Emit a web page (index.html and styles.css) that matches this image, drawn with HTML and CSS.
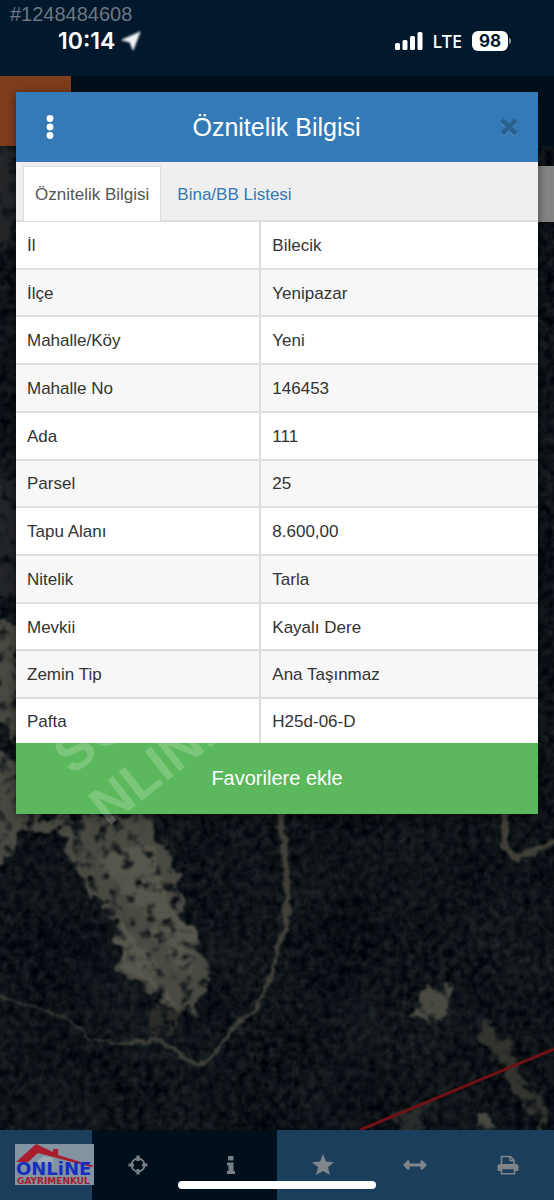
FILE: index.html
```html
<!DOCTYPE html>
<html lang="tr">
<head>
    <meta charset="UTF-8">
    <meta name="viewport" content="width=device-width, initial-scale=1.0">
    <title>Öznitelik Bilgisi</title>
    <link rel="stylesheet" href="styles.css">
</head>
<body>

    <div class="status-bar">
        <div class="listing-no">#1248484608</div>
        <div class="status-row">
            <div class="status-left">
                <span class="clock">10:14</span>
                <svg class="location" width="20" height="20" viewBox="0 0 20 20"><path d="M19 1L1 9L9 11L12 19Z" fill="#f0f3f5" stroke="#f0f3f5"/></svg>
            </div>
            <div class="status-right">
                <svg width="28" height="18" viewBox="0 0 28 18" fill="#fff">
                    <rect x="0" y="11" width="5" height="7" rx="1.500"/>
                    <rect x="7.500" y="8" width="5" height="10" rx="1.500"/>
                    <rect x="15" y="4" width="5" height="14" rx="1.500"/>
                    <rect x="22.500" y="0" width="5" height="18" rx="1.500"/>
                </svg>
                <span class="network">LTE</span>
                <span class="battery">98</span>
            </div>
        </div>
    </div>

    <div class="app-header">
        <div class="app-logo"></div>
    </div>

    <main class="map">
        <svg class="map-image" viewBox="0 0 554 984" preserveAspectRatio="xMidYMid slice">
            <defs>
                <filter id="forest" x="0" y="0" width="100%" height="100%" color-interpolation-filters="sRGB">
                    <feTurbulence type="fractalNoise" baseFrequency="0.13 0.117" numOctaves="3" seed="8" result="trees"/>
                    <feTurbulence type="fractalNoise" baseFrequency="0.013" numOctaves="3" seed="21" result="ground"/>
                    <feComposite in="trees" in2="ground" operator="arithmetic" k2="0.7" k3="0.3"/>
                    <feColorMatrix values="0.24 0 0 0 -0.07  0.25 0 0 0 -0.052  0.22 0.02 0 0 -0.03  0 0 0 0 1"/>
                </filter>
                <filter id="rough" x="-20%" y="-20%" width="140%" height="140%" color-interpolation-filters="sRGB">
                    <feTurbulence type="fractalNoise" baseFrequency="0.06" numOctaves="4" seed="3" result="n"/>
                    <feDisplacementMap in="SourceGraphic" in2="n" scale="30" xChannelSelector="R" yChannelSelector="G" result="d"/>
                    <feTurbulence type="fractalNoise" baseFrequency="0.083" numOctaves="4" seed="15"/>
                    <feColorMatrix values="0 0 0 0 0  0 0 0 0 0  0 0 0 0 0  4 0 0 0 -0.9" result="holes"/>
                    <feComposite in="d" in2="holes" operator="in"/>
                    <feGaussianBlur stdDeviation="0.9"/>
                </filter>
                <filter id="path" x="-20%" y="-20%" width="140%" height="140%">
                    <feTurbulence type="fractalNoise" baseFrequency="0.1" numOctaves="3" seed="5"/>
                    <feDisplacementMap in="SourceGraphic" scale="9" xChannelSelector="R" yChannelSelector="G"/>
                    <feGaussianBlur stdDeviation="0.9"/>
                </filter>
            </defs>
            <rect width="554" height="984" fill="#0f151a"/>
            <rect width="554" height="984" filter="url(#forest)"/>

            <!-- bare ground -->
            <g filter="url(#rough)" fill="#4a4a42">
                <path d="M-20 0H20V60L12 100H-20Z" fill="#242628"/>
                <path d="M-20 330H20V450H-20Z" fill="#24262a"/>
                <path d="M-20 480H20V600L-20 560Z"/>
                <path d="M-20 605L12 610L22 665L70 672L150 665L172 712L185 755L175 770L205 810L210 835L195 868L155 852L120 825L116 775L90 740L68 705L60 685L20 692L5 720L-20 725Z"/>
                <path d="M95 705L150 700L170 750L195 790L190 830L160 790L125 750Z" fill="#57564c"/>
                <path d="M120 770L175 855L140 835L118 805Z" fill="#59584e"/>
                <path d="M150 860L185 860L160 900L150 890Z" fill="#2c2c29"/>
                <path d="M410 870L440 833L456 846L443 868L425 877Z"/>
                <path d="M480 868L508 895L524 935L548 960L545 984L528 970L505 925L480 890Z" fill="#33342f"/>
                <path d="M398 960L425 960L425 984H398Z" fill="#292b2b"/>
                <path d="M478 974L490 960L500 984H478Z"/>
            </g>

            <!-- tracks -->
            <g filter="url(#path)" fill="none" stroke="#413f39" stroke-linecap="round">
                <path d="M282 660L286 720L289 765L278 800L273 825L258 860L230 885L212 912L195 920L180 908L160 895L120 897" stroke-width="4"/>
                <path d="M280 665L284 710L288 750L285 785" stroke-width="6"/>
                <path d="M120 897L90 896L80 882L55 868L0 850" stroke-width="2"/>
                <path d="M506 660L504 700L518 713L554 696" stroke-width="7"/>
            </g>
            <path d="M360 984L554 903" stroke="#6d1114" stroke-width="3" fill="none"/>
        </svg>
        <div class="map-control"></div>
    </main>

    <nav class="toolbar">
        <button class="tool" aria-label="Katmanlar"></button>
        <button class="tool tool-dark" aria-label="Konum">
            <svg width="20" height="20" viewBox="0 0 20 20" fill="none" stroke="#777f84">
                <circle cx="10" cy="10" r="6.500" stroke-width="1.800"/>
                <path d="M10 .5V6M10 14V19.500M.5 10H6M14 10H19.500" stroke-width="3.200"/>
            </svg>
        </button>
        <button class="tool tool-dark" aria-label="Bilgi">
            <svg width="10" height="20" viewBox="0 0 10 20" fill="#777f84">
                <rect x="2" y="1" width="5.500" height="4.500" rx="1"/>
                <path d="M1 7.500H7.500V16H9V19H1V16H2.500V10.500H1Z"/>
            </svg>
        </button>
        <button class="tool" aria-label="Favoriler">
            <svg width="22" height="22" viewBox="0 0 22 22" fill="#7f8588"><path d="M11 0L14 7.500L22 8.200L16 13.300L18 21L11 17L4 21L6 13.300L0 8.200L8 7.500Z"/></svg>
        </button>
        <button class="tool" aria-label="Ölçüm">
            <svg width="24" height="12" viewBox="0 0 24 12" fill="#7f8588"><path d="M0 6L5 1L6.500 2V4.500H17.500V2L19 1L24 6L19 11L17.500 10V7.500H6.500V10L5 11Z"/></svg>
        </button>
        <button class="tool" aria-label="Yazdır">
            <svg width="22" height="20" viewBox="0 0 22 20" fill="none" stroke="#7f8588" stroke-width="1.600">
                <path d="M4.500 10V1.500H13.500L17 5V10M13 1.500V5.500H17"/>
                <path d="M4.500 15.500H1V11Q1 9.500 3 9.500H19Q21 9.500 21 11V15.500H17.500V12.500H4.500Z" fill="#7f8588" stroke-width="1"/>
                <path d="M4.500 13.500H17.500V18.700H4.500Z" fill="#1c3e5d"/>
            </svg>
        </button>
        <svg class="agency-logo" width="79" height="41" viewBox="0 0 79 41" role="img">
            <rect width="79" height="41" fill="#8293a1"/>
            <path d="M22 17L29 12L38 14V20H24Z" fill="#9eaab4"/>
            <path d="M1 18L21 0L38 8V5H43V11L79 22L76 23L23 9L13 18Z" fill="#a91d2d"/>
            <text class="logo-name" x="1" y="31">ONLiNE</text>
            <text class="logo-sub" x="2" y="40">GAYRIMENKUL</text>
        </svg>
        <span class="home-indicator"></span>
    </nav>

    <div class="modal">
        <section class="dialog">
            <header class="dialog-header">
                <button class="icon-button menu" aria-label="Menü">
                    <svg width="8" height="24" viewBox="0 0 8 24" fill="#fff"><circle cx="4" cy="3.500" r="3.400"/><circle cx="4" cy="12" r="3.400"/><circle cx="4" cy="20.500" r="3.400"/></svg>
                </button>
                <h1>Öznitelik Bilgisi</h1>
                <button class="icon-button close" aria-label="Kapat">
                    <svg width="20" height="20" viewBox="0 0 20 20"><path d="M3 4L17 18M17 4L3 18" stroke="#5f94c4" stroke-width="5"/><path d="M3 3L17 17M17 3L3 17" stroke="#29628f" stroke-width="5"/></svg>
                </button>
            </header>

            <div class="tabs">
                <a href="#" class="tab active">Öznitelik Bilgisi</a>
                <a href="#" class="tab">Bina/BB Listesi</a>
            </div>

            <table class="info">
                <tr><th scope="row">İl</th><td>Bilecik</td></tr>
                <tr><th scope="row">İlçe</th><td>Yenipazar</td></tr>
                <tr><th scope="row">Mahalle/Köy</th><td>Yeni</td></tr>
                <tr><th scope="row">Mahalle No</th><td>146453</td></tr>
                <tr><th scope="row">Ada</th><td>111</td></tr>
                <tr><th scope="row">Parsel</th><td>25</td></tr>
                <tr><th scope="row">Tapu Alanı</th><td>8.600,00</td></tr>
                <tr><th scope="row">Nitelik</th><td>Tarla</td></tr>
                <tr><th scope="row">Mevkii</th><td>Kayalı Dere</td></tr>
                <tr><th scope="row">Zemin Tip</th><td>Ana Taşınmaz</td></tr>
                <tr><th scope="row">Pafta</th><td>H25d-06-D</td></tr>
            </table>

            <button class="favorite">Favorilere ekle</button>

            <svg class="watermark" width="300" height="180" viewBox="0 0 300 180">
                <g fill="#fff" fill-opacity="0.2">
                    <text transform="translate(56 122) rotate(-38)">SO</text>
                    <text transform="translate(92 173) rotate(-38)">NLINE</text>
                </g>
            </svg>
        </section>
    </div>

</body>
</html>
```
FILE: styles.css
```css
* {
    box-sizing: border-box;
}

body {
    margin: 0;
    min-height: 100vh;
    display: flex;
    flex-direction: column;
    position: relative;
    font-family: "Liberation Sans", Arial, sans-serif;
    font-size: 17px;
    color: #333;
    background-color: #0f151a;
}

button {
    border: none;
    padding: 0;
    background: none;
    font-family: inherit;
    cursor: pointer;
}

svg {
    display: block;
}

/* status bar */
.status-bar {
    height: 76px;
    padding: 2px 10px 0;
    background-color: #02182c;
    color: #fff;
}

.listing-no {
    font-size: 20px;
    line-height: 24px;
    color: #6c7782;
}

.status-row {
    display: flex;
    justify-content: space-between;
    align-items: center;
    height: 30px;
    padding: 0 36px 0 48px;
}

.status-left,
.status-right {
    display: flex;
    align-items: center;
}

.status-left {
    gap: 6px;
}

.status-right {
    gap: 10px;
}

.clock {
    font-family: Inter, sans-serif;
    font-size: 23px;
    font-weight: 600;
}

.location {
    filter: blur(1px);
}

.network {
    font-family: "Noto Sans", sans-serif;
    font-size: 18px;
    font-weight: 500;
}

.battery {
    position: relative;
    width: 36px;
    border-radius: 6px;
    background-color: #fff;
    color: #02182c;
    font-family: Inter, sans-serif;
    font-size: 17px;
    font-weight: 700;
    line-height: 20px;
    text-align: center;
}

.battery::after {
    content: "";
    position: absolute;
    right: -3px;
    top: 7px;
    width: 2px;
    height: 6px;
    border-radius: 0 2px 2px 0;
    background-color: #7d8994;
}

/* app header */
.app-header {
    height: 70px;
    background-color: #000f1c;
}

.app-logo {
    width: 71px;
    height: 100%;
    background-color: #803d1e;
}

/* map */
.map {
    flex: 1;
    position: relative;
    overflow: hidden;
}

.map-image {
    position: absolute;
    width: 100%;
    height: 100%;
}

.map-control {
    position: absolute;
    top: 20px;
    right: 0;
    width: 70px;
    height: 56px;
    background-color: #858585;
}

/* toolbar */
.toolbar {
    position: relative;
    display: grid;
    grid-template-columns: repeat(6, 1fr);
    height: 70px;
}

.tool {
    display: flex;
    align-items: center;
    justify-content: center;
    background-color: #1c3e5d;
}

.tool-dark {
    background-color: #000f1c;
}

.agency-logo {
    position: absolute;
    left: 15px;
    top: 14px;
    overflow: visible;
}

.logo-name {
    font-family: "DejaVu Sans", sans-serif;
    font-size: 18px;
    font-weight: 700;
    fill: #152fc0;
}

.logo-sub {
    font-family: "DejaVu Sans", sans-serif;
    font-size: 9px;
    font-weight: 700;
    fill: #a91d2d;
}

.home-indicator {
    position: absolute;
    left: 50%;
    bottom: 11px;
    width: 198px;
    height: 8px;
    margin-left: -99px;
    border-radius: 4px;
    background-color: #fff;
}

/* dialog */
.modal {
    position: absolute;
    top: 92px;
    left: 0;
    width: 100%;
    padding: 0 16px;
}

.dialog {
    position: relative;
    background-color: #efefef;
    box-shadow: 0 2px 10px rgba(0, 0, 0, 0.5);
}

.dialog-header {
    display: flex;
    align-items: center;
    justify-content: space-between;
    height: 70px;
    padding: 0 4px 0 15px;
    background-color: #337ab7;
}

.dialog-header h1 {
    margin: 0;
    font-size: 25px;
    font-weight: 400;
    color: #fff;
}

.icon-button {
    display: flex;
    align-items: center;
    justify-content: center;
    height: 40px;
}

.menu {
    width: 38px;
}

.close {
    width: 50px;
}

.tabs {
    display: flex;
    padding: 4px 7px 0;
    border-bottom: 2px solid #ddd;
}

.tab {
    padding: 2px 11px 0;
    border: 1px solid transparent;
    border-bottom: none;
    margin-right: 4px;
    line-height: 51px;
    color: #337ab7;
    text-decoration: none;
}

.tab.active {
    margin-bottom: -1px;
    border-color: #ddd;
    background-color: #fff;
    color: #555;
}

.info {
    width: 100%;
    height: 521px;
    border-spacing: 0;
    background-color: #fff;
}

.info tr:nth-child(even) {
    background-color: #f7f7f7;
}

.info th,
.info td {
    padding: 2px 11px 0;
    border-bottom: 2px solid #ddd;
    font-weight: 400;
    text-align: left;
}

.info th {
    width: 47%;
    border-right: 2px solid #ddd;
}

.info tr:last-child th,
.info tr:last-child td {
    border-bottom: none;
}

.favorite {
    display: block;
    width: 100%;
    height: 71px;
    background-color: #5cb85c;
    color: #fff;
    font-size: 20px;
}

.watermark {
    position: absolute;
    left: 0;
    bottom: -20px;
    pointer-events: none;
    font-size: 54px;
    font-weight: 700;
}
```
